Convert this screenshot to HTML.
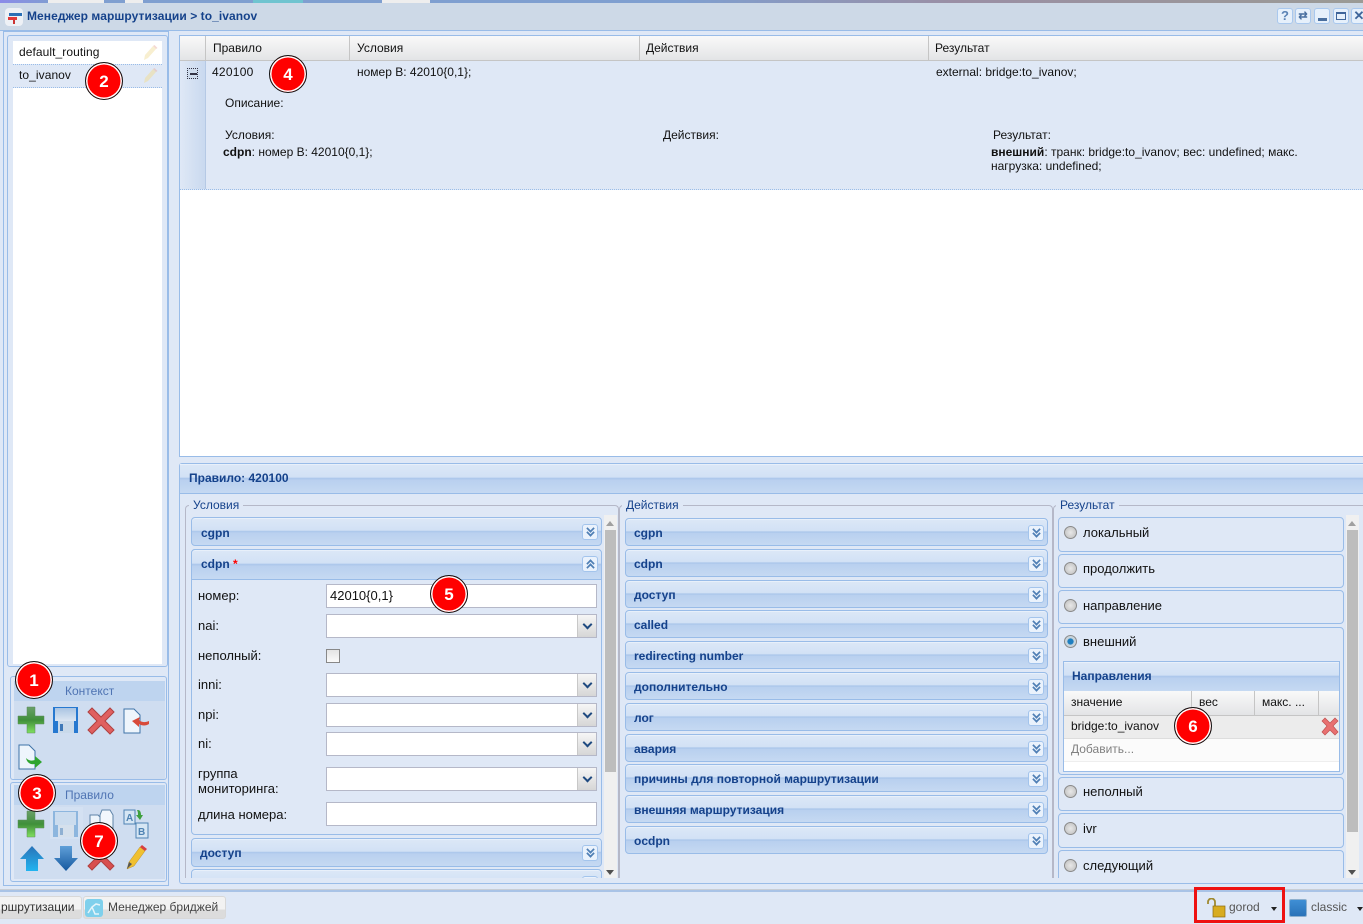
<!DOCTYPE html>
<html><head><meta charset="utf-8">
<style>
html,body{margin:0;padding:0}
body{width:1363px;height:924px;overflow:hidden;position:relative;background:#dfe8f6;font:12px/14px "Liberation Sans",sans-serif;color:#111}
.a,.h,.t,.b,.n,svg.i{position:absolute}
.a{box-sizing:border-box}
.t{white-space:nowrap}
.h{box-sizing:border-box;border:1px solid #99bce8;border-radius:4px 4px 0 0;background:linear-gradient(#dce8f7 0,#d2e1f5 45%,#a9c5ea 50%,#b9d0ef 55%,#c5d9f2 100%);box-shadow:inset 0 1px 0 #e8f0fa;color:#15428b;font-weight:bold;overflow:hidden}
.h span{position:absolute;left:9px;top:8px;white-space:nowrap}
.h.c{border-radius:4px}
.tg{position:absolute;right:3px;top:6px;width:16px;height:16px;box-sizing:border-box;border:1px solid #a3c4ec;border-radius:3px;background:#eaf2fc}
.tg:before,.tg:after{content:"";position:absolute;left:4px;width:5px;height:5px;border:solid #4f7fb5;border-width:0 2px 2px 0;transform:rotate(45deg) scale(.85)}
.tg:before{top:0}.tg:after{top:4px}
.tg.u:before,.tg.u:after{transform:rotate(225deg) scale(.85)}
.tg.u:before{top:3px}.tg.u:after{top:7px}
.f{position:absolute;box-sizing:border-box;background:#fff;border:1px solid #b5b8c8;padding:2px 3px;height:24px;line-height:18px;font-size:13px}
.f.s:after{content:"";position:absolute;right:0;top:0;bottom:0;width:18px;background:linear-gradient(#f6f6f6,#d6d6d6);border-left:1px solid #c8c8c8}
.f.s:before{content:"";position:absolute;right:5px;top:6px;width:5px;height:5px;border:solid #1f4a80;border-width:0 2px 2px 0;transform:rotate(45deg);z-index:1}
.l{position:absolute;left:198px;white-space:nowrap;font-size:13px}
.n{width:38px;height:38px;box-sizing:border-box;border-radius:50%;background:#f00;border:1px solid #111;box-shadow:inset 0 0 0 1.5px #fff;color:#fff;font-weight:bold;font-size:17px;line-height:37px;text-align:center;font-family:"Liberation Sans",sans-serif;z-index:5}
.b{box-sizing:border-box;border:1px solid #99bce8;border-radius:4px;background:#dfe8f6;left:1058px;width:286px}
.r{position:absolute;left:5px;top:8px;width:13px;height:13px;box-sizing:border-box;border-radius:50%;border:1px solid #8a8a8a;background:radial-gradient(#e8e8e8,#bdbdbd)}
.b .lb{position:absolute;left:24px;top:8px;white-space:nowrap;font-size:13px}
.th{position:absolute;top:0;height:100%;box-sizing:border-box;border-right:1px solid #c5c5c5;padding:4px 7px;white-space:nowrap}
.lg{position:absolute;color:#15428b;font-size:12px;white-space:nowrap;background:#dfe8f6;padding:0 4px}
.ac span{left:8px;top:7px}
.wb{left:0;top:8px;width:16px;height:16px;border:1px solid #a9c8ee;border-radius:3px;background:#e6f0fb}
</style></head><body>

<div class="a" style="left:0;top:0;width:1363px;height:3px;background:linear-gradient(90deg,#8b8be8 0,#7f9fd0 4%,#7f9fd0 50%,#9a8fa5 70%,#9a9a95 100%)"></div>
<div class="a" style="left:48px;top:0;width:56px;height:3px;background:#eee"></div>
<div class="a" style="left:125px;top:0;width:18px;height:3px;background:#eee"></div>
<div class="a" style="left:253px;top:0;width:50px;height:3px;background:#6fc4d0"></div>
<div class="a" style="left:382px;top:0;width:48px;height:3px;background:#eee"></div>

<!-- title bar -->
<div class="a" style="left:0;top:3px;width:1363px;height:28px;background:#cdd9e7;border-bottom:1px solid #99bce8"></div>
<div class="a" style="left:5px;top:8px;width:18px;height:18px;background:#eef1f6;border-radius:4px"></div>
<div class="a" style="left:9px;top:13px;width:13px;height:3px;background:#2a6fb5"></div>
<div class="a" style="left:8px;top:17px;width:9px;height:3px;background:#e03a3a"></div>
<div class="a" style="left:13px;top:20px;width:2px;height:4px;background:#c33"></div>
<div class="t" style="left:27px;top:9px;color:#15428b;font-weight:bold;font-size:12px;letter-spacing:.06px">Менеджер маршрутизации &gt; to_ivanov</div>
<div class="a wb" style="left:1277px;color:#5b83b5;font-weight:bold;font-size:13px;line-height:14px;text-align:center">?</div>
<div class="a wb" style="left:1295px;color:#4a6f9f;font-weight:bold;font-size:11px;line-height:14px;text-align:center">⇄</div>
<div class="a wb" style="left:1314px"><div class="a" style="left:3px;top:9px;width:9px;height:2.500px;background:#4a6f9f"></div></div>
<div class="a wb" style="left:1333px"><div class="a" style="left:2px;top:3px;width:10px;height:8px;border:1.500px solid #3f659a;border-top-width:2.500px"></div></div>
<div class="a wb" style="left:1351px;color:#3f659a;font-weight:bold;font-size:13px;line-height:14px;text-align:center">✕</div>

<!-- left panel -->
<div class="a" style="left:3px;top:31px;width:166px;height:855px;border:1px solid #99bce8;background:#dfe8f6"></div>
<div class="a" style="left:7px;top:35px;width:161px;height:632px;border:1px solid #99bce8;border-radius:3px"></div>
<div class="a" style="left:13px;top:41px;width:149px;height:623px;background:#fff"></div>
<div class="a" style="left:13px;top:64px;width:149px;height:24px;background:#dfe8f6;border-top:1px dotted #99bce8;border-bottom:1px dotted #99bce8"></div>
<div class="t" style="left:19px;top:45px;letter-spacing:.07px">default_routing</div>
<div class="t" style="left:19px;top:68px;letter-spacing:.07px">to_ivanov</div>
<svg class="i" style="left:141px;top:44px" width="18" height="18" viewBox="0 0 18 18"><path d="M3 16l1-5 8-9 3 3-8 9z" fill="#f8efd0"/><path d="M12 2l1.500-1 3 3-1.500 1z" fill="#f4d8d2"/></svg>
<svg class="i" style="left:141px;top:67px" width="18" height="18" viewBox="0 0 18 18"><path d="M3 16l1-5 8-9 3 3-8 9z" fill="#e8e2c4"/><path d="M12 2l1.500-1 3 3-1.500 1z" fill="#e4cccc"/></svg>

<!-- Context box -->
<div class="a" style="left:10px;top:676px;width:157px;height:104px;border:1px solid #99bce8;border-radius:3px;background:#dfe8f6"></div>
<div class="a" style="left:14px;top:681px;width:151px;height:98px;background:#cfddf0"></div>
<div class="a" style="left:14px;top:681px;width:151px;height:20px;background:#bed4ef"></div>
<div class="t" style="left:65px;top:684px;color:#4f74b3">Контекст</div>
<div class="a" style="left:10px;top:782px;width:157px;height:100px;border:1px solid #99bce8;border-radius:3px;background:#dfe8f6"></div>
<div class="a" style="left:14px;top:785px;width:151px;height:94px;background:#cfddf0"></div>
<div class="a" style="left:14px;top:785px;width:151px;height:20px;background:#bed4ef"></div>
<div class="t" style="left:65px;top:788px;color:#4f74b3">Правило</div>

<svg class="i" style="left:0;top:700px" width="170" height="180" viewBox="0 0 170 180">
<defs>
<linearGradient id="g" x1="0" y1="0" x2="0" y2="1"><stop offset="0" stop-color="#6aa06a"/><stop offset=".5" stop-color="#3f8f3a"/><stop offset="1" stop-color="#80e060"/></linearGradient>
<linearGradient id="bl" x1="0" y1="0" x2="0" y2="1"><stop offset="0" stop-color="#2a73b8"/><stop offset="1" stop-color="#22b4f0"/></linearGradient>
<linearGradient id="bd" x1="0" y1="0" x2="0" y2="1"><stop offset="0" stop-color="#5f9fd8"/><stop offset="1" stop-color="#15589f"/></linearGradient>
<linearGradient id="sv" x1="0" y1="0" x2="0" y2="1"><stop offset="0" stop-color="#a9c4e2"/><stop offset="1" stop-color="#dce6f2"/></linearGradient>
</defs>
<path d="M27 7h8v9h9v8h-9v9h-8v-9h-9v-8h9z" fill="url(#g)" stroke="#5b8a5b" stroke-width=".5"/>
<rect x="53" y="7" width="25" height="26" fill="#2678d0"/><rect x="55" y="8" width="21" height="13" fill="url(#sv)"/><rect x="58" y="21" width="16" height="12" fill="#c9d9ea"/><rect x="60" y="24" width="3" height="7" fill="#3f78b8"/>
<path d="M88 12l4-4 9 9 9-9 4 4-9 9 9 9-4 4-9-9-9 9-4-4 9-9z" fill="#e06060" stroke="#b04040"/>
<path d="M124 9h10l6 6v18h-16z" fill="#eef5fc" stroke="#3f73a8"/><path d="M149 21c-5 2-8 1-10-1l1-3-8 4 7 6 0-3c3 2 7 2 10 0z" fill="#d84a3a"/>
<path d="M19 45h10l6 6v18h-16z" fill="#eef5fc" stroke="#3f73a8"/><path d="M26 58c3 3 6 3 9 2v-4l7 6-7 6v-4c-4 1-8-1-9-6z" fill="#2fa52f"/>
<path d="M27 111h8v9h9v8h-9v9h-8v-9h-9v-8h9z" fill="url(#g)" stroke="#5b8a5b" stroke-width=".5"/>
<rect x="50" y="107" width="33" height="32" fill="#d6e3f2" opacity=".7"/>
<rect x="53" y="111" width="25" height="26" fill="#8db6de"/><rect x="55" y="112" width="21" height="13" fill="#cbdcee"/><rect x="58" y="125" width="16" height="12" fill="#d5e0ec"/><rect x="60" y="128" width="3" height="7" fill="#8fb0d2"/>
<path d="M90 115h8l5 5v14h-13z" fill="#eef5fc" stroke="#5f84a8"/><path d="M102 110h8l3 5v20h-13v-20z" fill="#f2f7fc" stroke="#5f84a8"/>
<rect x="124" y="110" width="11" height="14" fill="#d6e6f4" stroke="#4f83b3"/><rect x="136" y="123" width="12" height="15" fill="#d6e6f4" stroke="#4f83b3"/>
<text x="126" y="121" font-family="Liberation Sans" font-weight="bold" font-size="10" fill="#4f83b3">A</text><text x="138" y="135" font-family="Liberation Sans" font-weight="bold" font-size="10" fill="#4f83b3">B</text>
<path d="M138 110c2 0 3 2 3 5h2l-3 5-4-5h2c0-2 0-3-1-5z" fill="#3fa03f"/>
<path d="M32 146l12 13h-6v12h-12v-12h-6z" fill="url(#bl)"/>
<path d="M60 146h12v12h6l-12 13-12-13h6z" fill="url(#bd)"/>
<path transform="translate(0,136)" d="M88 12l4-4 9 9 9-9 4 4-9 9 9 9-4 4-9-9-9 9-4-4 9-9z" fill="#d84f4f" stroke="#b04040"/>
<path d="M127 169l2-7 11-15 5 4-11 15z" fill="#f0c030" stroke="#b89030" stroke-width=".5"/><path d="M140 147l2-2 5 4-2 2z" fill="#d84040"/><path d="M127 169l2-7 3 2z" fill="#555"/>
</svg>

<!-- grid -->
<div class="a" style="left:179px;top:35px;width:1184px;height:422px;border:1px solid #99bce8;border-right:0;background:#fff"></div>
<div class="a" style="left:180px;top:36px;width:1183px;height:25px;background:linear-gradient(#f9f9f9,#e3e4e6);border-bottom:1px solid #c5c5c5"></div>
<div class="a" style="left:205px;top:36px;width:1px;height:25px;background:#c5c5c5"></div>
<div class="a" style="left:349px;top:36px;width:1px;height:25px;background:#c5c5c5"></div>
<div class="a" style="left:639px;top:36px;width:1px;height:25px;background:#c5c5c5"></div>
<div class="a" style="left:928px;top:36px;width:1px;height:25px;background:#c5c5c5"></div>
<div class="t" style="left:213px;top:41px">Правило</div>
<div class="t" style="left:357px;top:41px">Условия</div>
<div class="t" style="left:646px;top:41px">Действия</div>
<div class="t" style="left:935px;top:41px">Результат</div>
<div class="a" style="left:180px;top:61px;width:1183px;height:129px;background:#dfe8f6;border-bottom:1px dotted #99bce8"></div>
<div class="a" style="left:180px;top:61px;width:26px;height:128px;background:linear-gradient(90deg,#dfe8f6,#c9d9ef);border-right:1px solid #b5c9e5"></div>
<div class="a" style="left:187px;top:68px;width:11px;height:11px;border:1px dotted #334;background:#cfdced"><div class="a" style="left:2px;top:4px;width:7px;height:1.500px;background:#334"></div></div>
<div class="t" style="left:212px;top:65px;letter-spacing:.25px">420100</div>
<div class="t" style="left:357px;top:65px">номер В: 42010{0,1};</div>
<div class="t" style="left:936px;top:65px">external: bridge:to_ivanov;</div>
<div class="t" style="left:225px;top:96px">Описание:</div>
<div class="t" style="left:225px;top:128px">Условия:</div>
<div class="t" style="left:223px;top:145px"><b>cdpn</b>: номер В: 42010{0,1};</div>
<div class="t" style="left:663px;top:128px">Действия:</div>
<div class="t" style="left:993px;top:128px">Результат:</div>
<div class="t" style="left:991px;top:145px"><b>внешний</b>: транк: bridge:to_ivanov; вес: undefined; макс.</div>
<div class="t" style="left:991px;top:159px">нагрузка: undefined;</div>

<!-- rule panel -->
<div class="a" style="left:179px;top:463px;width:1184px;height:421px;border:1px solid #99bce8;border-right:0;border-radius:3px 0 0 3px;background:#dfe8f6"></div>
<div class="h" style="left:180px;top:464px;width:1183px;height:30px;border-width:0 0 1px 0;border-radius:0"><span style="top:7px">Правило: 420100</span></div>

<!-- fieldsets -->
<div class="a" style="left:185px;top:505px;width:434px;height:373px;border:1px solid #b5b8c8;border-bottom:0;border-radius:4px 4px 0 0"></div>
<div class="lg" style="left:189px;top:498px">Условия</div>
<div class="a" style="left:619px;top:505px;width:434px;height:373px;border:1px solid #b5b8c8;border-bottom:0;border-radius:4px 4px 0 0"></div>
<div class="lg" style="left:622px;top:498px">Действия</div>
<div class="a" style="left:1053px;top:505px;width:310px;height:373px;border:1px solid #b5b8c8;border-width:1px 0 0 1px;border-radius:4px 0 0 0"></div>
<div class="lg" style="left:1056px;top:498px">Результат</div>

<!-- conditions -->
<div class="a" style="left:191px;top:517px;width:411px;height:361px;overflow:hidden">
<div class="h c" style="left:0;top:0;width:411px;height:29px;border-radius:4px"><span>cgpn</span><i class="tg"></i></div>
<div class="a" style="left:0;top:32px;width:411px;height:286px;border:1px solid #99bce8;border-radius:4px;background:#dfe8f6"></div>
<div class="h" style="left:0;top:32px;width:411px;height:31px"><span style="top:7px">cdpn <b style="color:#f00">*</b></span><i class="tg u"></i></div>
<div class="h c" style="left:0;top:321px;width:411px;height:29px"><span style="left:8px;top:7px">доступ</span><i class="tg"></i></div>
<div class="h c" style="left:0;top:352px;width:411px;height:29px"><i class="tg"></i></div>
</div>
<div class="l" style="top:589px">номер:</div>
<div class="f" style="left:326px;top:584px;width:271px">42010{0,1}</div>
<div class="l" style="top:619px">nai:</div>
<div class="f s" style="left:326px;top:614px;width:271px"></div>
<div class="l" style="top:649px">неполный:</div>
<div class="a" style="left:326px;top:649px;width:14px;height:14px;border:1px solid #888;background:linear-gradient(#e4e4e4,#fafafa)"></div>
<div class="l" style="top:678px">inni:</div>
<div class="f s" style="left:326px;top:673px;width:271px"></div>
<div class="l" style="top:708px">npi:</div>
<div class="f s" style="left:326px;top:703px;width:271px"></div>
<div class="l" style="top:737px">ni:</div>
<div class="f s" style="left:326px;top:732px;width:271px"></div>
<div class="l" style="top:767px">группа</div>
<div class="l" style="top:782px">мониторинга:</div>
<div class="f s" style="left:326px;top:767px;width:271px"></div>
<div class="l" style="top:808px">длина номера:</div>
<div class="f" style="left:326px;top:802px;width:271px"></div>

<!-- scrollbar 1 -->
<div class="a" style="left:604px;top:515px;width:13px;height:363px;background:#f0f0f0"></div>
<div class="a" style="left:605px;top:530px;width:11px;height:242px;background:#bdbdbd"></div>
<div class="a" style="left:606px;top:521px;border:4px solid transparent;border-top:0;border-bottom:5px solid #a0a0a0"></div>
<div class="a" style="left:606px;top:870px;border:4px solid transparent;border-bottom:0;border-top:5px solid #505050"></div>

<!-- actions -->
<div class="h c ac" style="left:625px;top:518px;width:423px;height:28px"><span>cgpn</span><i class="tg"></i></div>
<div class="h c ac" style="left:625px;top:549px;width:423px;height:28px"><span>cdpn</span><i class="tg"></i></div>
<div class="h c ac" style="left:625px;top:580px;width:423px;height:28px"><span>доступ</span><i class="tg"></i></div>
<div class="h c ac" style="left:625px;top:610px;width:423px;height:28px"><span>called</span><i class="tg"></i></div>
<div class="h c ac" style="left:625px;top:641px;width:423px;height:28px"><span>redirecting number</span><i class="tg"></i></div>
<div class="h c ac" style="left:625px;top:672px;width:423px;height:28px"><span>дополнительно</span><i class="tg"></i></div>
<div class="h c ac" style="left:625px;top:703px;width:423px;height:28px"><span>лог</span><i class="tg"></i></div>
<div class="h c ac" style="left:625px;top:734px;width:423px;height:28px"><span>авария</span><i class="tg"></i></div>
<div class="h c ac" style="left:625px;top:764px;width:423px;height:28px"><span>причины для повторной маршрутизации</span><i class="tg"></i></div>
<div class="h c ac" style="left:625px;top:795px;width:423px;height:28px"><span>внешняя маршрутизация</span><i class="tg"></i></div>
<div class="h c ac" style="left:625px;top:826px;width:423px;height:28px"><span>ocdpn</span><i class="tg"></i></div>

<!-- result -->
<div class="b" style="top:517px;height:35px"><i class="r"></i><span class="lb">локальный</span></div>
<div class="b" style="top:554px;height:34px"><i class="r" style="top:7px"></i><span class="lb" style="top:7px">продолжить</span></div>
<div class="b" style="top:590px;height:34px"><i class="r"></i><span class="lb">направление</span></div>
<div class="b" style="top:627px;height:148px"><i class="r" style="top:7px;background:radial-gradient(#1f7fc0 35%,#c8d4dc 45%)"></i><span class="lb" style="top:7px">внешний</span></div>
<div class="b" style="top:777px;height:34px"><i class="r" style="top:7px"></i><span class="lb" style="top:7px">неполный</span></div>
<div class="b" style="top:813px;height:35px"><i class="r"></i><span class="lb">ivr</span></div>
<div class="b" style="top:850px;height:28px;border-bottom:0;border-radius:4px 4px 0 0"><i class="r"></i><span class="lb">следующий</span></div>
<div class="a" style="left:1063px;top:661px;width:277px;height:111px;border:1px solid #99bce8;background:#fff"></div>
<div class="h" style="left:1064px;top:662px;width:275px;height:29px;border-width:0;border-radius:0"><span style="left:8px;top:7px">Направления</span></div>
<div class="a" style="left:1064px;top:691px;width:275px;height:25px;background:linear-gradient(#f9f9f9,#e3e4e6);border-bottom:1px solid #c5c5c5">
<div class="th" style="left:0;width:128px">значение</div><div class="th" style="left:128px;width:63px">вес</div><div class="th" style="left:191px;width:64px">макс. ...</div>
</div>
<div class="a" style="left:1064px;top:716px;width:275px;height:23px;background:#ececec;border-bottom:1px solid #ddd"></div>
<div class="t" style="left:1071px;top:719px">bridge:to_ivanov</div>
<svg class="i" style="left:1320px;top:717px" width="20" height="20" viewBox="0 0 20 20"><path d="M2 4l3-3 5 5 5-5 3 3-5 5 5 6-3 3-5-5-5 5-3-3 5-6z" fill="#e87070" stroke="#c05050" stroke-width=".7"/></svg>
<div class="a" style="left:1064px;top:739px;width:275px;height:23px;background:#fbfbfb;border-bottom:1px solid #eee"></div>
<div class="t" style="left:1071px;top:742px;color:#808080">Добавить...</div>

<!-- scrollbar 2 -->
<div class="a" style="left:1346px;top:515px;width:13px;height:363px;background:#f0f0f0"></div>
<div class="a" style="left:1347px;top:530px;width:11px;height:302px;background:#bdbdbd"></div>
<div class="a" style="left:1348px;top:521px;border:4px solid transparent;border-top:0;border-bottom:5px solid #a0a0a0"></div>
<div class="a" style="left:1348px;top:870px;border:4px solid transparent;border-bottom:0;border-top:5px solid #505050"></div>

<!-- bottom bar -->
<div class="a" style="left:0;top:889px;width:1363px;height:1px;background:#c8cdd4"></div>
<div class="a" style="left:0;top:890px;width:1363px;height:2px;background:#a9c3e6"></div>
<div class="a" style="left:0;top:892px;width:1363px;height:32px;background:#dfe8f6"></div>
<div class="a" style="left:-10px;top:896px;width:92px;height:23px;border:1px solid #d8d8d8;border-radius:3px;background:linear-gradient(#f2f2f2 60%,#dcdcdc 60%)"></div>
<div class="t" style="left:1px;top:900px;color:#333">ршрутизации</div>
<div class="a" style="left:83px;top:896px;width:143px;height:23px;border:1px solid #d8d8d8;border-radius:3px;background:linear-gradient(#f2f2f2 60%,#dcdcdc 60%)"></div>
<div class="a" style="left:85px;top:899px;width:18px;height:18px;border-radius:3px;background:#7fd0ec"></div>
<svg class="i" style="left:85px;top:899px" width="18" height="18" viewBox="0 0 18 18"><path d="M3 14l4-6 4-3 4 1M7 8l3 7h4" fill="none" stroke="#e4f4fa" stroke-width="1.500"/></svg>
<div class="t" style="left:108px;top:900px;color:#444">Менеджер бриджей</div>
<div class="a" style="left:1194px;top:887px;width:91px;height:36px;border:3px solid #ee1111"></div>
<svg class="i" style="left:1206px;top:898px" width="22" height="20" viewBox="0 0 22 20"><path d="M2 6V4a3.500 3.500 0 0 1 7 0v4" fill="none" stroke="#a08a30" stroke-width="1.800"/><rect x="7" y="8" width="12" height="11" fill="#d8ac20" stroke="#8a6a10" stroke-width=".7"/></svg>
<div class="t" style="left:1229px;top:900px;color:#555">gorod</div>
<div class="a" style="left:1271px;top:907px;border:3.500px solid transparent;border-bottom:0;border-top:4px solid #222"></div>
<div class="a" style="left:1289px;top:899px;width:18px;height:18px;border-radius:2px;background:linear-gradient(#3f8fd5,#2a72b8);border:1px solid #8eb0cf"></div>
<div class="t" style="left:1311px;top:900px;color:#555">classic</div>
<div class="a" style="left:1357px;top:907px;border:3.500px solid transparent;border-bottom:0;border-top:4px solid #222"></div>

<!-- markers -->
<div class="n" style="left:15px;top:661px">1</div>
<div class="n" style="left:85px;top:62px">2</div>
<div class="n" style="left:18px;top:774px">3</div>
<div class="n" style="left:269px;top:55px">4</div>
<div class="n" style="left:430px;top:575px">5</div>
<div class="n" style="left:1174px;top:707px">6</div>
<div class="n" style="left:80px;top:822px">7</div>
</body></html>
